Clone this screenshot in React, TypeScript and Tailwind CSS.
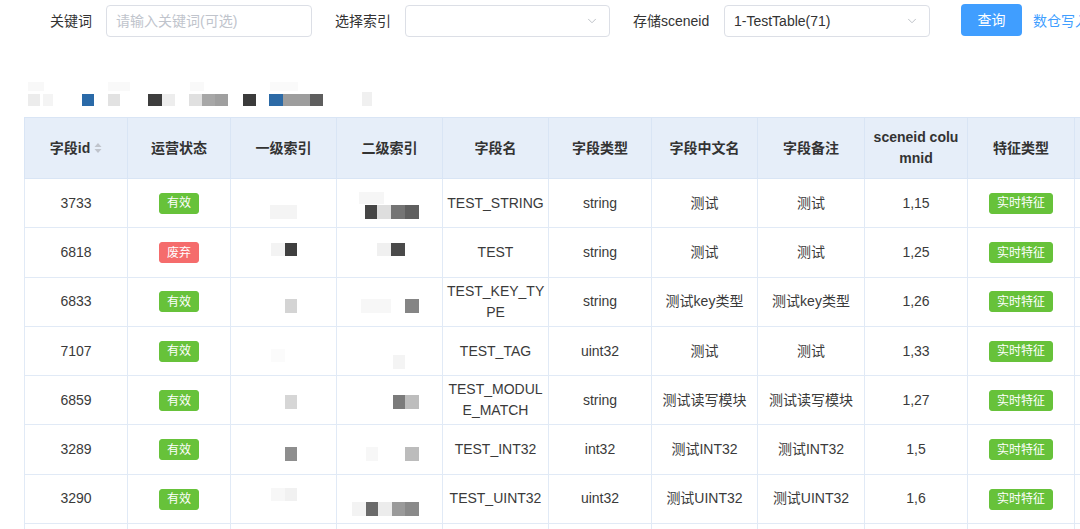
import type { ReactNode } from 'react'
import { ChevronDown } from 'lucide-react'

// [x, y, w, h, fill] inside a cell, for the pixelated (censored) index values
type Block = [number, number, number, number, string]

interface Row {
  id:     number
  status: 'ok' | 'dead'
  idx1:   Block[]
  idx2:   Block[]
  name:   ReactNode
  type:   string
  cn:     string
  note:   string
  col:    string
}

const rows: Row[] = [
  {
    id: 3733, status: 'ok',
    idx1: [[39, 26, 27, 14, '#f4f4f4']],
    idx2: [[22, 13, 25, 12, '#f6f6f6'], [28, 26, 12, 14, '#464646'], [40, 26, 14, 14, '#dedede'], [54, 26, 14, 14, '#747474'], [68, 26, 14, 14, '#5f5f5f']],
    name: 'TEST_STRING', type: 'string', cn: '测试', note: '测试', col: '1,15',
  },
  {
    id: 6818, status: 'dead',
    idx1: [[40, 15, 14, 13, '#f3f3f3'], [54, 15, 12, 13, '#3f3f3f']],
    idx2: [[40, 15, 14, 13, '#f0f0f0'], [54, 15, 14, 13, '#4a4a4a']],
    name: 'TEST', type: 'string', cn: '测试', note: '测试', col: '1,25',
  },
  {
    id: 6833, status: 'ok',
    idx1: [[54, 21, 12, 14, '#d4d4d4']],
    idx2: [[24, 21, 30, 14, '#f7f7f7'], [68, 21, 14, 14, '#858585']],
    name: <>TEST_KEY_TY<br />PE</>, type: 'string', cn: '测试key类型', note: '测试key类型', col: '1,26',
  },
  {
    id: 7107, status: 'ok',
    idx1: [[40, 22, 14, 13, '#fbfbfb']],
    idx2: [[56, 28, 12, 14, '#f4f4f4']],
    name: 'TEST_TAG', type: 'uint32', cn: '测试', note: '测试', col: '1,33',
  },
  {
    id: 6859, status: 'ok',
    idx1: [[54, 19, 12, 14, '#d6d6d6']],
    idx2: [[56, 19, 12, 14, '#7b7b7b'], [68, 19, 14, 14, '#bdbdbd']],
    name: <>TEST_MODUL<br />E_MATCH</>, type: 'string', cn: '测试读写模块', note: '测试读写模块', col: '1,27',
  },
  {
    id: 3289, status: 'ok',
    idx1: [[54, 21, 12, 14, '#8e8e8e']],
    idx2: [[29, 21, 12, 14, '#f7f7f7'], [68, 21, 14, 14, '#bcbcbc']],
    name: 'TEST_INT32', type: 'int32', cn: '测试INT32', note: '测试INT32', col: '1,5',
  },
  {
    id: 3290, status: 'ok',
    idx1: [[40, 13, 14, 13, '#f7f7f7'], [54, 13, 12, 13, '#f1f1f1']],
    idx2: [[15, 27, 14, 14, '#f3f3f3'], [29, 27, 12, 14, '#6a6a6a'], [41, 27, 14, 14, '#ececec'], [55, 27, 13, 14, '#9a9a9a'], [68, 27, 14, 14, '#8a8a8a']],
    name: 'TEST_UINT32', type: 'uint32', cn: '测试UINT32', note: '测试UINT32', col: '1,6',
  },
]

// top strip mosaic (blurred title)
const strip: Block[] = [
  [28, 2, 16, 9, '#f8f8f8'], [108, 2, 22, 9, '#f9f9f9'], [190, 2, 14, 9, '#f9f9f9'], [270, 2, 28, 9, '#fafafa'],
  [28, 14, 12, 12, '#ececec'], [43, 14, 10, 12, '#f4f4f4'], [82, 14, 12, 12, '#2a6aa8'], [108, 14, 12, 12, '#e2e2e2'],
  [148, 14, 14, 12, '#3d3d3d'], [162, 14, 13, 12, '#ededed'], [189, 14, 13, 12, '#e0e0e0'], [202, 14, 13, 12, '#a7a7a7'],
  [215, 14, 13, 12, '#9f9f9f'], [243, 14, 13, 12, '#3b3b3b'], [269, 14, 14, 12, '#2c6aa6'], [283, 14, 27, 12, '#9d9d9d'],
  [310, 14, 13, 12, '#5e5e5e'], [362, 12, 10, 14, '#f0f0f0'],
]

function Mosaic({ blocks, w, h }: { blocks: Block[]; w: number; h: number }) {
  return (
    <svg width={w} height={h} className="block">
      {blocks.map(([x, y, bw, bh, fill], i) => (
        <rect key={i} x={x} y={y} width={bw} height={bh} fill={fill} />
      ))}
    </svg>
  )
}

function Tag({ children, red }: { children: ReactNode; red?: boolean }) {
  return (
    <span
      className={
        red
          ? 'inline-flex h-[21px] items-center rounded-[3px] border border-[#f56c6c] bg-[#f56c6c] px-[7px] text-xs text-white'
          : 'inline-flex h-[21px] items-center rounded-[3px] border border-[#67c23a] bg-[#67c23a] px-[7px] text-xs text-white'
      }
    >
      {children}
    </span>
  )
}

function SortCaret() {
  return (
    <svg width="8" height="12" viewBox="0 0 8 12" className="ml-[4px] inline-block align-[-1px]">
      <path d="M4 1 L7.5 5 H0.5 Z" fill="#c0c4cc" />
      <path d="M4 11 L7.5 7 H0.5 Z" fill="#c0c4cc" />
    </svg>
  )
}

function Select({ value, w }: { value?: string; w: string }) {
  return (
    <div className={`flex h-[32px] shrink-0 items-center justify-between rounded-[4px] border border-[#dcdfe6] bg-white pl-[9px] pr-[10px] text-sm text-[#333] ${w}`}>
      <span>{value}</span>
      <ChevronDown size={14} strokeWidth={1.5} className="text-[#b4b8bf]" />
    </div>
  )
}

const headers: ReactNode[] = [
  <>字段id<SortCaret /></>,
  '运营状态', '一级索引', '二级索引', '字段名', '字段类型', '字段中文名', '字段备注',
  <>sceneid colu<br />mnid</>,
  '特征类型',
  '',
]

const th = 'border border-[#d9e5f5] px-[6px] text-center text-sm font-bold leading-[21px] text-[#333]'
const td = 'h-[49.3px] border border-[#e1eaf6] px-[4px] text-center text-sm leading-[21px] text-[#3a3a3a]'
const blank = 'h-[49.3px] border border-[#e1eaf6]'

export default function App() {
  return (
    <div className="h-[529px] w-[1080px] overflow-hidden bg-white font-['Liberation_Sans','Noto_Sans_CJK_SC',sans-serif]">
      {/* search form */}
      <div className="flex items-center whitespace-nowrap pl-[50px] pt-[5px] text-sm text-[#333]">
        <span className="w-[42px] shrink-0">关键词</span>
        <div className="ml-[14px] flex h-[32px] w-[206px] shrink-0 items-center rounded-[4px] border border-[#dcdfe6] pl-[9px] text-sm text-[#c0c4cc]">
          请输入关键词(可选)
        </div>
        <span className="ml-[23px] w-[57px] shrink-0">选择索引</span>
        <div className="ml-[13px] shrink-0"><Select w="w-[205px]" /></div>
        <span className="ml-[23px] w-[79px] shrink-0">存储sceneid</span>
        <div className="ml-[12px] shrink-0"><Select value="1-TestTable(71)" w="w-[206px]" /></div>
        <button className="-mt-[2px] ml-[31px] h-[32px] w-[61px] shrink-0 rounded-[4px] bg-[#409eff] text-sm text-white">
          查询
        </button>
        <span className="ml-[11px] shrink-0 text-[#409eff]">数仓写入配置</span>
      </div>

      {/* blurred title */}
      <div className="mt-[43px] h-[28px]">
        <Mosaic blocks={strip} w={400} h={28} />
      </div>

      {/* table */}
      <div className="mt-[9px] pl-[24px]">
        <table className="w-[1170px] table-fixed border-collapse">
          <colgroup>
            <col className="w-[103px]" />
            <col className="w-[103px]" />
            <col className="w-[106px]" />
            <col className="w-[106px]" />
            <col className="w-[106px]" />
            <col className="w-[103px]" />
            <col className="w-[106px]" />
            <col className="w-[107px]" />
            <col className="w-[103px]" />
            <col className="w-[107px]" />
            <col className="w-[120px]" />
          </colgroup>
          <thead>
            <tr className="bg-[#e6eef9]">
              {headers.map((h, i) => (
                <th key={i} className={`${th} h-[61px]`}>{h}</th>
              ))}
            </tr>
          </thead>
          <tbody>
            {rows.map((r) => (
              <tr key={r.id}>
                <td className={td}>{r.id}</td>
                <td className={td}>
                  {r.status === 'ok' ? <Tag>有效</Tag> : <Tag red>废弃</Tag>}
                </td>
                <td className="border border-[#e1eaf6] p-0">
                  <Mosaic blocks={r.idx1} w={105} h={48} />
                </td>
                <td className="border border-[#e1eaf6] p-0">
                  <Mosaic blocks={r.idx2} w={105} h={48} />
                </td>
                <td className={td}>{r.name}</td>
                <td className={td}>{r.type}</td>
                <td className={td}>{r.cn}</td>
                <td className={td}>{r.note}</td>
                <td className={td}>{r.col}</td>
                <td className={td}><Tag>实时特征</Tag></td>
                <td className={td}></td>
              </tr>
            ))}
            {/* next row, only its top edge is in view */}
            <tr>
              {headers.map((_, i) => (
                <td key={i} className={blank}></td>
              ))}
            </tr>
          </tbody>
        </table>
      </div>
    </div>
  )
}
